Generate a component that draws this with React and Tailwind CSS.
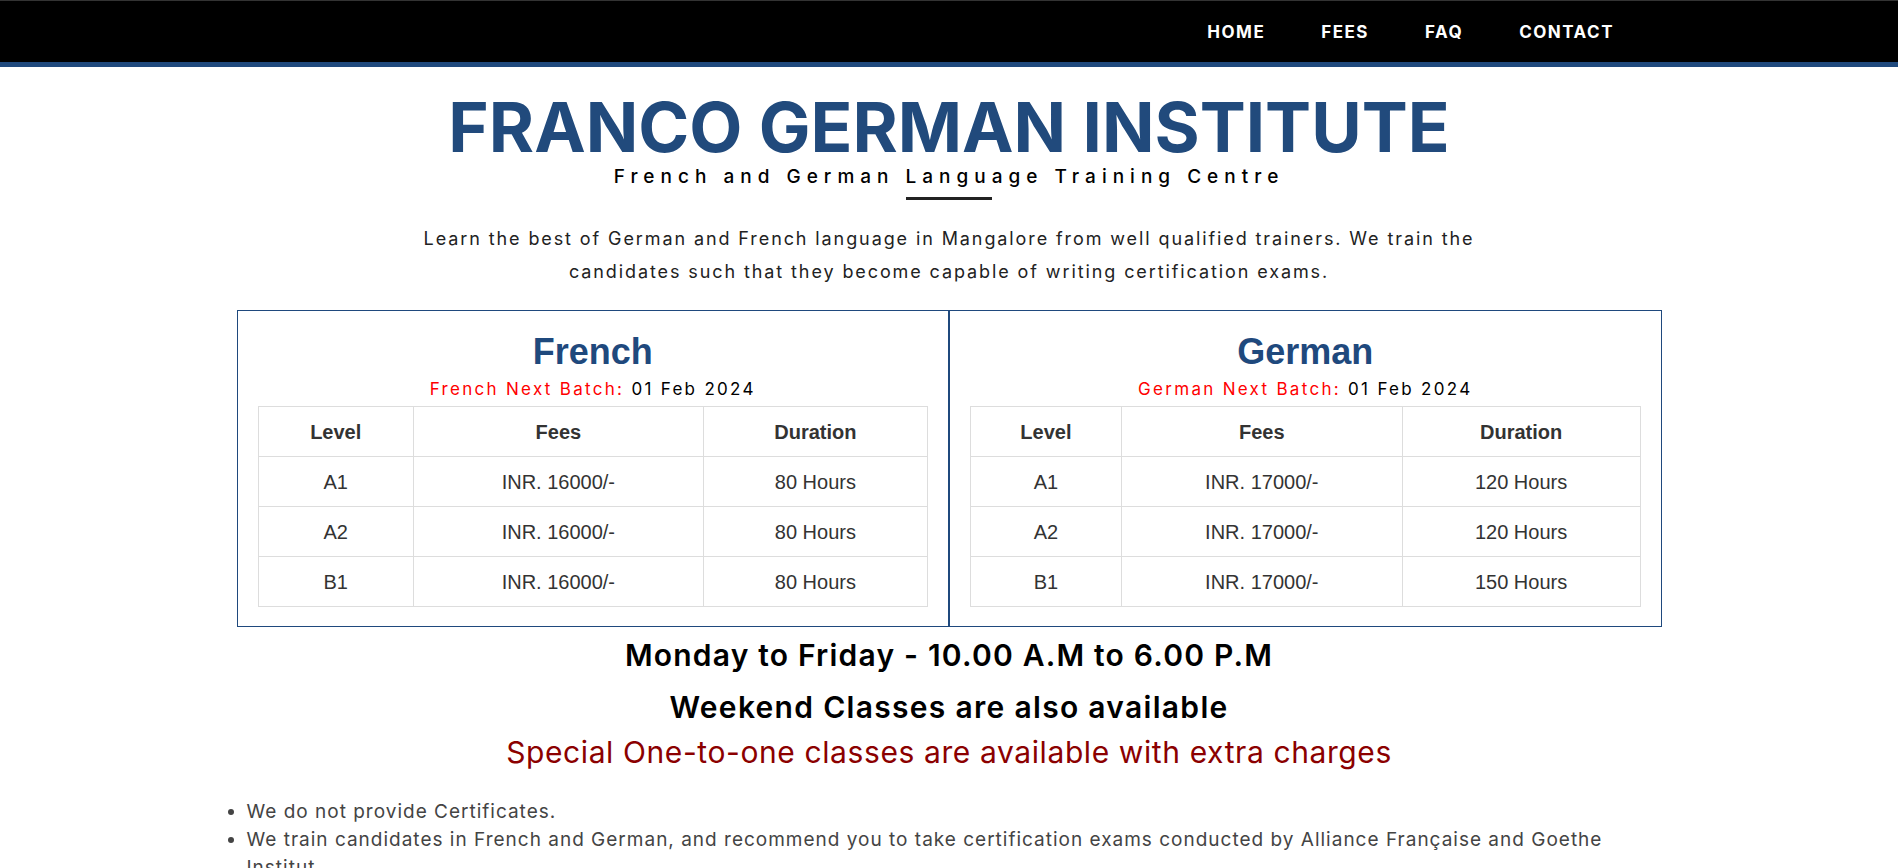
import React from 'react';

const courses = [
  {
    name: 'French',
    batch: '01 Feb 2024',
    cols: ['w-[156px]', 'w-[291px]', 'w-[225px]'],
    rows: [
      ['A1', 'INR. 16000/-', '80 Hours'],
      ['A2', 'INR. 16000/-', '80 Hours'],
      ['B1', 'INR. 16000/-', '80 Hours'],
    ],
  },
  {
    name: 'German',
    batch: '01 Feb 2024',
    cols: ['w-[151px]', 'w-[281px]', 'w-[238px]'],
    rows: [
      ['A1', 'INR. 17000/-', '120 Hours'],
      ['A2', 'INR. 17000/-', '120 Hours'],
      ['B1', 'INR. 17000/-', '150 Hours'],
    ],
  },
];

const body = "font-['Inter',sans-serif]";
const arial = "font-['Liberation_Sans',Arial,sans-serif]";

const CourseBox = ({ course }) => (
  <div className="flex-1 border border-[#1f497d] px-[20px] pt-[19px] pb-[19px]">
    <h2 className={`${arial} text-center text-[36px] font-bold leading-[44px] text-[#1f497d]`}>
      {course.name}
    </h2>
    <p className={`${body} mt-[3px] text-center text-[17px] leading-[24px] tracking-[2.3px] text-black`}>
      <span className="text-[#ff0000]">{course.name} Next Batch:</span> {course.batch}
    </p>
    <table className={`${arial} mt-[5px] w-full border-collapse text-[20px] text-[#333]`}>
      <thead>
        <tr className="h-[50px]">
          {['Level', 'Fees', 'Duration'].map((h, i) => (
            <th key={h} className={`${course.cols[i]} border border-[#ddd] font-bold`}>{h}</th>
          ))}
        </tr>
      </thead>
      <tbody>
        {course.rows.map((r) => (
          <tr key={r[0]} className="h-[50px]">
            {r.map((c, i) => (
              <td key={i} className="border border-[#ddd] text-center">{c}</td>
            ))}
          </tr>
        ))}
      </tbody>
    </table>
  </div>
);

const App = () => {
  return (
    <div className={`${body} min-h-screen bg-white`}>
      {/* Navbar */}
      <nav className="h-[67px] border-t border-t-[#333] border-b-[5px] border-b-[#1f497d] bg-black">
        <ul className="flex h-full items-center justify-end pr-[256px] pt-[3px]">
          {['HOME', 'FEES', 'FAQ', 'CONTACT'].map((item) => (
            <li key={item} className="px-[28px] text-[17px] font-bold tracking-[1.5px] text-white">
              {item}
            </li>
          ))}
        </ul>
      </nav>

      {/* Header */}
      <div className="flex flex-col items-center">
        <h1 className="mt-[23px] text-[69px] font-bold leading-[74px] text-[#214a7c]">
          FRANCO GERMAN INSTITUTE
        </h1>
        <p className="text-[19px] font-medium leading-[26px] tracking-[6px] text-black">
          French and German Language Training Centre
        </p>
        <div className="mt-[7px] h-[3px] w-[86px] bg-[#222]" />
        <p className="mt-[22px] w-[1070px] text-center text-[18px] leading-[33px] tracking-[1.9px] text-[#222]">
          Learn the best of German and French language in Mangalore from well qualified trainers. We train the candidates such that they become capable of writing certification exams.
        </p>
      </div>

      {/* Fees */}
      <div className="mx-auto mt-[22px] w-[1425px]">
        <div className="flex">
          {courses.map((c) => (
            <CourseBox key={c.name} course={c} />
          ))}
        </div>

        <div className="mt-[8px] flex flex-col items-center">
          <h3 className="text-[30px] font-semibold leading-[40px] tracking-[1.2px] text-black">
            Monday to Friday - 10.00 A.M to 6.00 P.M
          </h3>
          <h3 className="mt-[12px] text-[30px] font-semibold leading-[40px] tracking-[1.3px] text-black">
            Weekend Classes are also available
          </h3>
          <p className="mt-[5px] text-[30px] leading-[40px] tracking-[0.6px] text-[#8b0000]">
            Special One-to-one classes are available with extra charges
          </p>
        </div>

        <ul className="mt-[26px] list-disc pl-[10px] pr-[40px] text-[19px] leading-[28px] tracking-[1px] text-[#444]">
          <li>We do not provide Certificates.</li>
          <li>
            We train candidates in French and German, and recommend you to take certification exams conducted by Alliance Française and Goethe Institut.
          </li>
        </ul>
      </div>
    </div>
  );
};

export default App;
